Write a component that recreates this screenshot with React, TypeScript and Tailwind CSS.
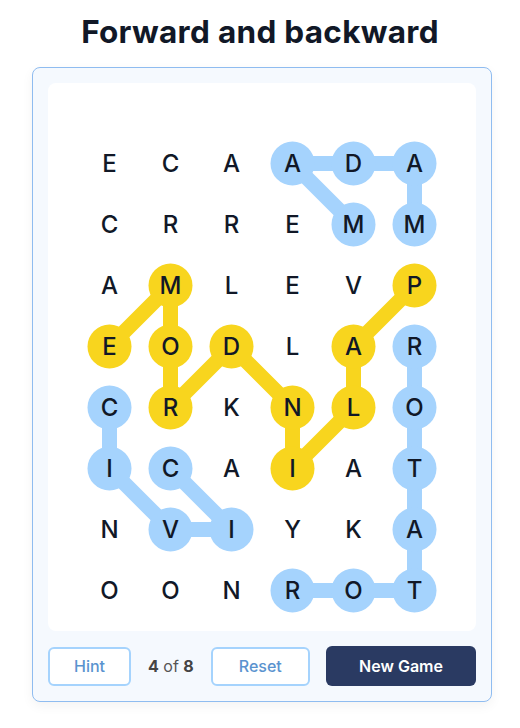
import React from "react";

// 격자 데이터
const GRID = [
  "ECAADA",
  "CRREMM",
  "AMLEVP",
  "EODLAR",
  "CRKNLO",
  "ICAIAT",
  "NVIYKA",
  "OONROT",
];

const CELL = 61;
const BLUE = "#a5d3fd";
const YELLOW = "#f8d51e";

type Word = { color: string; cells: [number, number][] };

const WORDS: Word[] = [
  { color: BLUE, cells: [[1, 4], [0, 3], [0, 4], [0, 5], [1, 5]] },
  { color: BLUE, cells: [[4, 0], [5, 0], [6, 1], [6, 2], [5, 1]] },
  { color: BLUE, cells: [[3, 5], [4, 5], [5, 5], [6, 5], [7, 5], [7, 4], [7, 3]] },
  {
    color: YELLOW,
    cells: [[3, 0], [2, 1], [3, 1], [4, 1], [3, 2], [4, 3], [5, 3], [4, 4], [3, 4], [2, 5]],
  },
];

const center = (i: number) => CELL / 2 + CELL * i;

function Paths() {
  return (
    <svg
      className="absolute inset-0"
      width={CELL * 6}
      height={CELL * 8}
      viewBox={`0 0 ${CELL * 6} ${CELL * 8}`}
    >
      {WORDS.map((w, wi) => (
        <g key={wi}>
          <polyline
            points={w.cells.map(([r, c]) => `${center(c)},${center(r)}`).join(" ")}
            fill="none"
            stroke={w.color}
            strokeWidth={15}
            strokeLinejoin="round"
          />
          {w.cells.map(([r, c]) => (
            <circle key={`${r}-${c}`} cx={center(c)} cy={center(r)} r={22} fill={w.color} />
          ))}
        </g>
      ))}
    </svg>
  );
}

export default function App() {
  return (
    <div className="flex flex-col items-center bg-white min-h-screen font-['Inter',sans-serif] text-[#111827]">
      <h1 className="mt-[13px] mb-[17px] h-[37px] text-[31.5px] leading-[37px] font-bold tracking-[0.3px]">
        Forward and backward
      </h1>

      <div className="self-start ml-[32px] w-[460px] rounded-lg border border-[#8fbcf0] bg-[#f5f9fe] p-[15px] shadow-[0_4px_12px_rgba(0,0,0,0.05)]">
        {/* 게임판 */}
        <div className="flex justify-center rounded-lg bg-white pt-[50px] pb-[10px]">
          <div className="relative w-[366px] h-[488px]">
            <Paths />
            <div className="relative grid grid-cols-6">
              {GRID.map((row, r) =>
                row.split("").map((ch, c) => (
                  <div
                    key={`${r}-${c}`}
                    className="flex h-[61px] w-[61px] items-center justify-center text-[24px] font-medium"
                  >
                    {ch}
                  </div>
                ))
              )}
            </div>
          </div>
        </div>

        {/* 하단 버튼 */}
        <div className="mt-[15px] flex items-center">
          <button className="h-[39px] w-[83px] rounded-md border-2 border-[#a5d3fd] bg-white text-[16px] font-medium text-[#5a93cf]">
            Hint
          </button>
          <div className="ml-[17px] text-[16px] text-[#555]">
            <span className="font-bold text-[#444]">4</span> of{" "}
            <span className="font-bold text-[#444]">8</span>
          </div>
          <button className="ml-[17px] h-[39px] w-[99px] rounded-md border-2 border-[#a5d3fd] bg-white text-[16px] font-medium text-[#5a93cf]">
            Reset
          </button>
          <button className="ml-auto h-[40px] w-[150px] rounded-md bg-[#2a3a62] text-[16px] font-semibold text-white">
            New Game
          </button>
        </div>
      </div>
    </div>
  );
}
